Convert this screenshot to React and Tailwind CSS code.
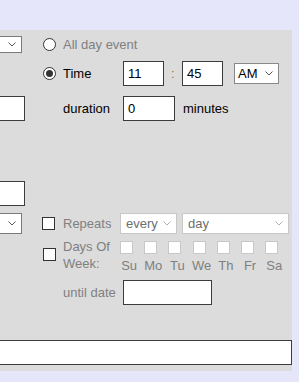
const Chevron = ({ light }) => (
  <svg width="8" height="5" viewBox="0 0 8 5" className="shrink-0">
    <polyline points="0.5,0.5 4,4 7.5,0.5" fill="none" stroke={light ? '#b0b0b0' : '#555'} strokeWidth="1" />
  </svg>
);

const Radio = ({ checked }) => (
  <div className="flex h-[13px] w-[13px] items-center justify-center rounded-full border border-[#333] bg-white">
    {checked && <div className="h-[7px] w-[7px] rounded-full bg-[#333]" />}
  </div>
);

const Box = ({ light }) => (
  <div className={`h-[13px] w-[13px] bg-white border ${light ? 'border-[#c8c8c8]' : 'border-[#333]'}`} />
);

const Field = ({ className, value }) => (
  <div className={`flex h-[25px] items-center border border-[#3c3c3c] bg-white pl-[4px] text-black ${className}`}>
    {value}
  </div>
);

const days = ['Su', 'Mo', 'Tu', 'We', 'Th', 'Fr', 'Sa'];

export default function App() {
  return (
    <div className="min-h-[382px] w-[299px] overflow-hidden bg-[#e6e6fa] pt-[30px] font-['Liberation_Sans',Arial,sans-serif] text-[13px] leading-[17px]">
      <div className="-ml-[200px] w-[492px] bg-[#dcdcdc] pb-[6px]">
        <div className="flex">
          {/* left column, mostly cut off */}
          <div className="flex w-[225px] flex-col items-end">
            <div className="mr-[3px] mt-[6px] flex h-[17px] w-[120px] items-center justify-end border border-[#7a7a7a] bg-white pr-[5px]">
              <Chevron />
            </div>
            <Field className="mt-[43px] w-[150px]" />
            <Field className="mt-[60px] w-[150px]" />
            <div className="mr-[3px] mt-[7px] flex h-[21px] w-[120px] items-center justify-end border border-[#7a7a7a] bg-white pr-[5px]">
              <Chevron />
            </div>
          </div>

          {/* right column */}
          <div className="ml-[18px] flex flex-col">
            <div className="mt-[6px] flex h-[17px] items-center">
              <div className="w-[20px]"><Radio /></div>
              <span className="text-[#808080]">All day event</span>
            </div>

            <div className="mt-[8px] flex h-[25px] items-center">
              <div className="w-[20px]"><Radio checked /></div>
              <span className="w-[60px] text-black">Time</span>
              <Field className="w-[41px]" value="11" />
              <span className="w-[18px] pl-[7px] text-[#9a7a40]">:</span>
              <Field className="w-[41px]" value="45" />
              <div className="ml-[11px] flex h-[21px] w-[45px] items-center justify-between border border-[#888] bg-white pl-[3px] pr-[5px] text-black">
                AM
                <Chevron />
              </div>
            </div>

            <div className="mt-[10px] flex h-[25px] items-center">
              <div className="w-[20px]" />
              <span className="w-[60px] text-black">duration</span>
              <Field className="w-[52px]" value="0" />
              <span className="ml-[8px] text-black">minutes</span>
            </div>

            <div className="mt-[92px] flex h-[21px] items-center">
              <div className="-ml-[1px] w-[21px]"><Box /></div>
              <span className="w-[57px] text-[#808080]">Repeats</span>
              <div className="flex h-[21px] w-[57px] items-center justify-between border border-[#c8c8c8] bg-white pl-[5px] pr-[5px] text-[#6d6d6d]">
                every
                <Chevron light />
              </div>
              <div className="ml-[5px] flex h-[21px] w-[107px] items-center justify-between border border-[#c8c8c8] bg-white pl-[5px] pr-[5px] text-[#6d6d6d]">
                day
                <Chevron light />
              </div>
            </div>

            <div className="mt-[4px] flex items-start">
              <div className="mt-[10px] w-[20px]"><Box /></div>
              <div className="w-[53px] text-[#808080]">
                Days Of
                <br />
                Week:
              </div>
              <div className="flex">
                {days.map((d) => (
                  <div key={d} className="flex w-[24.2px] flex-col">
                    <div className="ml-[4px] mt-[3px]"><Box light /></div>
                    <div className="mt-[3px] pl-[2px] text-center text-[#808080]">{d}</div>
                  </div>
                ))}
              </div>
            </div>

            <div className="mt-[6px] flex h-[25px] items-center">
              <div className="w-[20px]" />
              <span className="w-[60px] text-[#808080]">until date</span>
              <Field className="w-[89px]" />
            </div>
          </div>
        </div>

        <Field className="mt-[35px] w-full" />
      </div>
    </div>
  );
}
